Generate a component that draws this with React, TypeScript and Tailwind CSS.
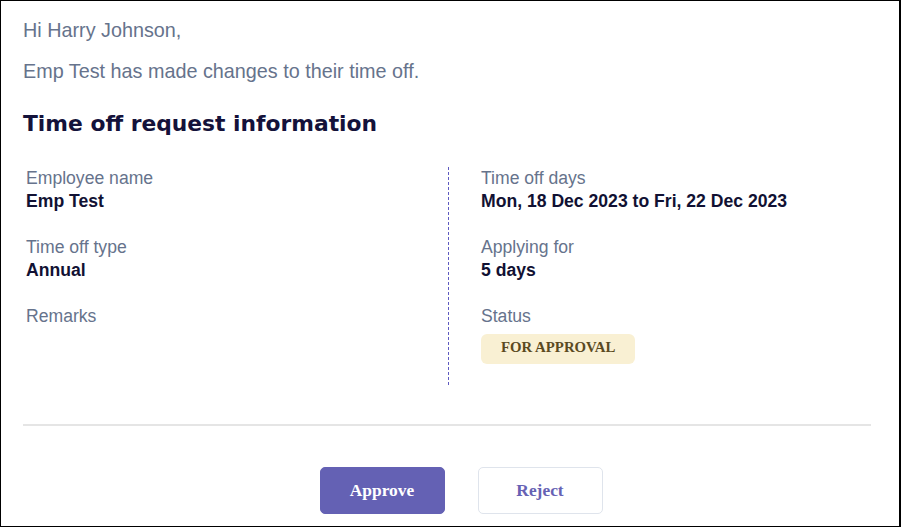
import React from "react";

interface Field {
  label: string;
  value?: string;
  badge?: string;
}

const leftFields: Field[] = [
  { label: "Employee name", value: "Emp Test" },
  { label: "Time off type", value: "Annual" },
  { label: "Remarks" },
];

const rightFields: Field[] = [
  { label: "Time off days", value: "Mon, 18 Dec 2023 to Fri, 22 Dec 2023" },
  { label: "Applying for", value: "5 days" },
  { label: "Status", badge: "FOR APPROVAL" },
];

function FieldList({ fields }: { fields: Field[] }) {
  return (
    <div className="flex flex-col gap-[23px]">
      {fields.map((f) => (
        <div key={f.label} className="text-[17.6px] leading-[23px]">
          <div className="text-[#66738c]">{f.label}</div>
          {f.value && <div className="font-bold text-[#111133]">{f.value}</div>}
          {f.badge && (
            <div className="mt-[6px] inline-flex h-[30px] items-center rounded-[6px] bg-[#f9f0d3] px-[20px] pb-[4px] font-['Liberation_Serif',serif] text-[14.8px] font-bold leading-[26px] text-[#5b4a1f]">
              {f.badge}
            </div>
          )}
        </div>
      ))}
    </div>
  );
}

export default function App() {
  return (
    <div className="h-[527px] w-[901px] overflow-hidden border-t border-l border-b border-r-2 border-black bg-white font-['Liberation_Sans',Arial,sans-serif]">
      <div className="pt-[18px] pl-[22px] pr-[28px]">
        <p className="text-[19.8px] leading-[23px] text-[#66738c]">Hi Harry Johnson,</p>
        <p className="mt-[18px] text-[19.8px] leading-[23px] text-[#66738c]">
          Emp Test has made changes to their time off.
        </p>

        <h1 className="mt-[28px] font-['DejaVu_Sans',sans-serif] text-[21.8px] font-bold leading-[26px] text-[#14123a]">
          Time off request information
        </h1>

        {/* Details */}
        <div className="mt-[30px] grid grid-cols-[425px_1fr]">
          <div className="pl-[3px]">
            <FieldList fields={leftFields} />
          </div>
          <div className="border-l border-dashed border-l-[#5f5ac0] pl-[32px] pb-[21px]">
            <FieldList fields={rightFields} />
          </div>
        </div>

        <div className="mt-[39px] h-[2px] bg-[#e5e5e5]" />

        {/* Actions */}
        <div className="mt-[41px] flex justify-center gap-[33px] pl-[28px] font-['Liberation_Serif',serif] text-[17.4px] font-bold">
          <button className="h-[47px] w-[125px] rounded-[5px] border border-[#6461b4] bg-[#6461b4] text-white">
            Approve
          </button>
          <button className="h-[47px] w-[125px] rounded-[5px] border border-[#dfe4ec] bg-white text-[#6662b4]">
            Reject
          </button>
        </div>
      </div>
    </div>
  );
}
